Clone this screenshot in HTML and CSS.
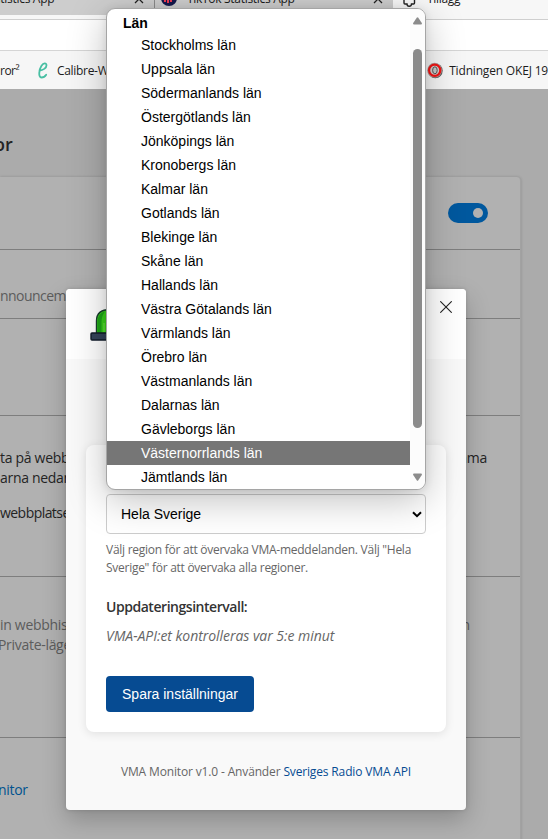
FILE: index.html
```html
<!DOCTYPE html>
<html lang="sv">
<head>
<meta charset="utf-8">
<title>VMA Monitor</title>
<link rel="stylesheet" href="styles.css">
</head>
<body>
<header class="chrome">
  <div class="tabs">
    <div class="tab tab-first"><span class="tab-text">tatistics App</span>
      <svg class="tab-x" width="10" height="10" viewBox="0 0 10 10"><path d="M1 1l8 8M9 1l-8 8"/></svg></div>
    <div class="tab tab-second">
      <svg class="favicon" width="16" height="16" viewBox="0 0 16 16"><circle cx="8" cy="8" r="8" fill="#15194d"/><path d="M4 4v8M7 3v10M10 5v7" stroke="#ee3c52" stroke-width="2"/></svg>
      <span class="tab-text">TikTok Statistics App</span>
      <svg class="tab-x" width="10" height="10" viewBox="0 0 10 10"><path d="M1 1l8 8M9 1l-8 8"/></svg></div>
    <div class="tab tab-active">
      <svg class="puzzle" width="13" height="16" viewBox="0 0 13 16"><path d="M1 3v9q0 1 1 1h2q0 2.200 2.200 2.200T8.500 13h2q1 0 1-1V9"/></svg>
      <span class="tab-text">Tillägg</span></div>
  </div>
  <div class="chrome-strip"></div>
  <div class="toolbar"></div>
  <div class="bookmarks">
    <span class="bm-mirror">ror²</span>
    <svg class="calibre" width="11" height="17" viewBox="0 0 11 17"><path d="M2.500 8.500C6 8.500 9.500 6 9.500 3.200 9.500.6 6.500.8 4.500 3.800 2 7.500 1 15.500 4.500 15.500c2 0 3.500-1 4.700-2.800"/></svg>
    <span class="bm-calibre">Calibre-Web</span>
    <svg class="okej" width="16" height="17" viewBox="0 0 16 17"><circle cx="8.300" cy="8.800" r="7.400" fill="#555"/><circle cx="7.600" cy="8.200" r="7.400" fill="#b5a5a3"/><circle cx="7.700" cy="8.300" r="5.600" fill="#d9d0ce" stroke="#f31414" stroke-width="2.200"/><ellipse cx="7.900" cy="8.300" rx="2.300" ry="3.500" fill="#c9c9c9" stroke="#555" stroke-width="1"/></svg>
    <span class="bm-okej">Tidningen OKEJ 19</span>
  </div>
</header>

<main class="page">
  <h1 class="page-title">or</h1>
  <section class="card">
    <div class="row row-toggle"><span class="toggle"><span class="knob"></span></span></div>
    <div class="row row-desc"><span class="t-announce">nnouncement</span></div>
    <div class="row row-blank"></div>
    <div class="row row-access">
      <div class="line split"><span class="t-ta">ta på webb</span><span class="t-mma">amma</span></div>
      <div class="line t-arna">arna nedan</div>
      <div class="line t-webb">webbplatser</div>
    </div>
    <div class="row row-private">
      <div class="line split"><span class="t-in">in webbhist</span><span class="t-n">n</span></div>
      <div class="line t-priv">Private-läge</div>
    </div>
    <div class="row row-link"><a class="t-link">nitor</a></div>
  </section>
</main>

<div class="dialog">
  <div class="dialog-head">
    <svg class="lamp" width="40" height="36" viewBox="0 0 40 36"><path d="M6.500 26V13Q6.500 1.500 20 1.500T33.500 13V26z" fill="#3ad21b" stroke="#183c2e" stroke-width="1.400"/><path d="M7.500 25V13Q8 5 15 3.500 11.500 8 11.500 14V25z" fill="#1da519"/><path d="M14 24v-9" stroke="#70ec4a" stroke-width="1"/><rect x="1" y="25" width="38" height="7" rx="1" fill="#34435a" stroke="#121c2b" stroke-width="1.400"/></svg>
    <svg class="close" width="12" height="12" viewBox="0 0 12 12"><path d="M.3.300l11.400 11.400M11.700.300L.3 11.700"/></svg>
  </div>
  <div class="dialog-body">
    <div class="panel">
      <div class="select"><span>Hela Sverige</span>
        <svg width="10" height="7" viewBox="0 0 10 7"><path d="M1 1.200l4 4 4-4"/></svg></div>
      <p class="hint"><span class="h1">Välj region för att övervaka VMA-meddelanden. Välj "Hela</span><br><span class="h2">Sverige" för att övervaka alla regioner.</span></p>
      <div class="label"><span>Uppdateringsintervall:</span></div>
      <div class="interval"><span>VMA-API:et kontrolleras var 5:e minut</span></div>
      <button class="save">Spara inställningar</button>
    </div>
    <footer class="foot"><span>VMA Monitor v1.0 - Använder <a>Sveriges Radio VMA API</a></span></footer>
  </div>
</div>

<div class="menu">
  <div class="list">
    <div class="group">Län</div>
    <div class="opt">Stockholms län</div>
    <div class="opt">Uppsala län</div>
    <div class="opt">Södermanlands län</div>
    <div class="opt">Östergötlands län</div>
    <div class="opt">Jönköpings län</div>
    <div class="opt">Kronobergs län</div>
    <div class="opt">Kalmar län</div>
    <div class="opt">Gotlands län</div>
    <div class="opt">Blekinge län</div>
    <div class="opt">Skåne län</div>
    <div class="opt">Hallands län</div>
    <div class="opt">Västra Götalands län</div>
    <div class="opt">Värmlands län</div>
    <div class="opt">Örebro län</div>
    <div class="opt">Västmanlands län</div>
    <div class="opt">Dalarnas län</div>
    <div class="opt">Gävleborgs län</div>
    <div class="opt active">Västernorrlands län</div>
    <div class="opt">Jämtlands län</div>
  </div>
  <div class="scroll">
    <svg class="arrow" width="9" height="8" viewBox="0 0 9 8"><path d="M3.700.8q.8-1 1.600 0L8.800 6q.5 1.300-.8 1.500H1Q-.3 7.300.2 6z"/></svg>
    <div class="thumb"></div>
    <svg class="arrow" width="9" height="8" viewBox="0 0 9 8"><path d="M3.700 7.200q.8 1 1.600 0L8.800 2Q9.300.7 8 .5H1Q-.3.7.2 2z"/></svg>
  </div>
</div>
</body>
</html>
```
FILE: styles.css
```css
* { box-sizing: border-box; }
body {
  margin: 0;
  width: 548px;
  height: 839px;
  overflow: hidden;
  position: relative;
  background: #ababab;
  font-family: "Open Sans", "Noto Sans", sans-serif;
  font-size: 14px;
  color: #242424;
}
svg { display: block; flex: none; }
span, .line { white-space: nowrap; }

/* Browser chrome */
.tabs { display: flex; height: 15px; background: #cdcdcd; overflow: hidden; }
.tab { display: flex; align-items: flex-start; height: 15px; }
.tab-text { font-size: 12px; line-height: 16px; margin-top: -9px; color: #1a1a1a; letter-spacing: -0.3px; }
.tab-first { width: 155px; border-right: 1px solid #8b8b8b; justify-content: space-between; padding-right: 10px; }
.tab-first .tab-text { margin-left: -10px; }
.tab-second { width: 238px; padding: 0 10px 0 6px; }
.tab-second .tab-x { margin-left: auto; }
.favicon { margin: -10px 10px 0 0; }
.tab-x { margin-top: -6px; fill: none; stroke: #222; stroke-width: 1.3; }
.tab-active { flex: 1; background: #f7f7f7; padding-left: 10px; }
.puzzle { margin: -9px 11px 0 0; fill: none; stroke: #222; stroke-width: 1.4; }
.chrome-strip { height: 5px; background: #f7f7f7; border-bottom: 1px solid #cfcfcf; }
.toolbar { height: 31px; background: #fff; border-bottom: 1px solid #d5d5d5; }
.bookmarks { display: flex; align-items: center; height: 38px; background: #f6f6f6; font-size: 12px; color: #1c1c1c; }
.bm-mirror { width: 37px; letter-spacing: -0.5px; }
.calibre { fill: none; stroke: #48bfa3; stroke-width: 1.8; stroke-linecap: round; }
.bm-calibre { width: 371px; margin-left: 9px; letter-spacing: -0.3px; }
.bm-okej { margin-left: 6px; letter-spacing: -0.18px; }

/* Dimmed page */
.page { padding-top: 43px; }
.page-title { margin: 0 0 21px -6px; height: 24px; font-size: 18px; line-height: 24px; font-weight: 600; }
.card { width: 521px; height: 670px; background: #b1b1b1; border-radius: 0 4px 0 0; border-right: 1px solid #a2a2a2; box-shadow: 0 0 3px rgba(0,0,0,.18); }
.row { border-bottom: 1px solid #7e7e7e; }
.row-toggle { height: 73px; display: flex; justify-content: flex-end; padding: 26px 32px 0 0; }
.toggle { width: 40px; height: 20px; border-radius: 10px; background: #00589e; display: flex; align-items: center; justify-content: flex-end; padding-right: 5px; }
.knob { width: 10px; height: 10px; border-radius: 5px; background: #b1b1b1; }
.row-desc { height: 69px; padding-top: 36px; line-height: 20px; color: #5c5c5c; }
.row-blank { height: 97px; }
.row-access { height: 161px; padding-top: 32px; }
.row-private { height: 161px; padding-top: 38px; color: #5c5c5c; }
.row-link { border: 0; padding-top: 42px; line-height: 20px; }
.line { line-height: 20px; }
.split { display: flex; justify-content: space-between; }
.t-webb { margin-top: 15px; }
.t-mma { margin-right: 33px; letter-spacing: -0.2px; }
.t-n { margin-right: 50px; }
.t-link { color: #00538f; margin-left: -2px; letter-spacing: -0.3px; }
.t-announce, .t-webb { letter-spacing: -0.55px; }
.t-ta, .t-arna, .t-in { letter-spacing: -0.3px; }
.t-priv { letter-spacing: -0.3px; margin-left: -2px; }

/* Extension options dialog */
.dialog {
  position: absolute;
  left: 66px;
  top: 289px;
  width: 400px;
  height: 521px;
  border-radius: 4px;
  background: #f9f9f9;
  overflow: hidden;
  display: flex;
  flex-direction: column;
  box-shadow: 0 10px 24px rgba(0,0,0,.22), 0 0 4px rgba(0,0,0,.15);
}
.dialog-head { height: 70px; background: #fff; display: flex; justify-content: space-between; padding: 12px 14px 0 24px; }
.lamp { margin-top: 7px; }
.close { fill: none; stroke: #222; stroke-width: 1.1; }
.dialog-body { flex: 1; padding: 86px 20px 0; }
.panel { height: 287px; background: #fff; border-radius: 8px; padding: 49px 20px 0; box-shadow: 0 2px 10px rgba(0,0,0,.1); }
.select { display: flex; align-items: center; justify-content: space-between; height: 40px; border: 1px solid #ccc; border-radius: 4px; padding: 0 3px 0 14px; font: 14px/20px "Liberation Sans", Arial, sans-serif; color: #000; }
.select svg { fill: none; stroke: #000; stroke-width: 2; }
.hint { margin: 7px 0 0; font-size: 12px; line-height: 18px; color: #666; }
.h1 { letter-spacing: -0.26px; }
.h2 { letter-spacing: -0.27px; }
.label { margin-top: 20px; line-height: 20px; font-weight: 600; color: #333; letter-spacing: -0.46px; }
.interval { margin-top: 9px; line-height: 20px; font-style: italic; color: #666; letter-spacing: -0.04px; }
.save { display: block; margin-top: 30px; width: 148px; height: 36px; border: 0; border-radius: 4px; background: #064b92; color: #fff; font: 14px "Liberation Sans", Arial, sans-serif; padding: 0; }
.foot { margin-top: 31px; text-align: center; font-size: 12px; line-height: 18px; color: #666; letter-spacing: -0.15px; }
.foot a { color: #064b92; }

/* Open select list */
.menu {
  position: absolute;
  left: 106px;
  top: 8px;
  width: 320px;
  height: 482px;
  border: 1px solid #a5a5a5;
  border-radius: 9px;
  background: #fff;
  overflow: hidden;
  display: flex;
  font: 14px/24px "Liberation Sans", Arial, sans-serif;
  color: #000;
  box-shadow: 0 10px 38px rgba(0,0,0,.25), 0 1px 8px rgba(0,0,0,.1);
}
.list { flex: 1; padding-top: 4px; }
.group { font-weight: 700; line-height: 20px; padding-left: 16px; }
.opt { height: 24px; padding-left: 34px; }
.opt.active { background: #767676; color: #fff; }
.scroll { width: 15px; background: #fcfcfc; display: flex; flex-direction: column; align-items: center; justify-content: space-between; padding: 8px 0 8px; }
.thumb { width: 9px; height: 379px; border-radius: 5px; background: #8b8b8b; margin-bottom: 21px; }
.arrow { fill: #8b8b8b; }
```
